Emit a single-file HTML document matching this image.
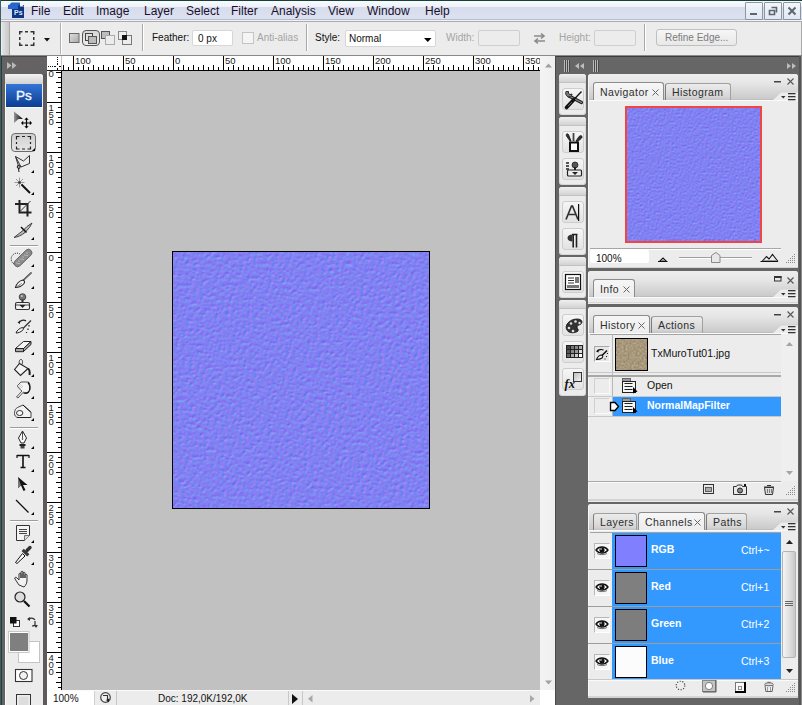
<!DOCTYPE html><html><head><meta charset="utf-8"><style>
*{margin:0;padding:0;box-sizing:border-box}
html,body{width:802px;height:705px;overflow:hidden}
body{position:relative;background:#616161;font-family:"Liberation Sans",sans-serif;}
div{position:absolute}
.t{white-space:nowrap;line-height:1}
svg{position:absolute;overflow:visible}
.tab{font-size:10.5px;letter-spacing:0.4px;color:#2e2e2e}
.op{font-size:10px;color:#111}
</style></head><body>
<svg width="0" height="0" style="position:absolute">
<defs>
<filter id="nm" x="0" y="0" width="100%" height="100%" color-interpolation-filters="sRGB">
 <feTurbulence type="fractalNoise" baseFrequency="0.28" numOctaves="3" seed="3"/>
 <feColorMatrix type="matrix" values="1 0 0 0 0  1 0 0 0 0  1 0 0 0 0  0 0 0 0 1"/>
 <feComponentTransfer result="h"><feFuncR type="gamma" amplitude="2" exponent="3" offset="0"/><feFuncG type="gamma" amplitude="2" exponent="3" offset="0"/><feFuncB type="gamma" amplitude="2" exponent="3" offset="0"/></feComponentTransfer>
 <feConvolveMatrix in="h" order="3" kernelMatrix="-1 0 1 -2 0 2 -1 0 1" divisor="23" bias="0.505" preserveAlpha="true" result="dx"/>
 <feConvolveMatrix in="h" order="3" kernelMatrix="-1 -2 -1 0 0 0 1 2 1" divisor="23" bias="0.505" preserveAlpha="true" result="dy"/>
 <feColorMatrix in="dx" type="matrix" values="1 0 0 0 0  0 0 0 0 0  0 0 0 0 0  0 0 0 0 1" result="r"/>
 <feColorMatrix in="dy" type="matrix" values="0 0 0 0 0  1 0 0 0 0  0 0 0 0 0.95  0 0 0 0 1" result="g"/>
 <feComposite in="r" in2="g" operator="arithmetic" k2="1" k3="1"/>
</filter>
<filter id="nm2" x="0" y="0" width="100%" height="100%" color-interpolation-filters="sRGB">
 <feTurbulence type="fractalNoise" baseFrequency="0.5" numOctaves="3" seed="3"/>
 <feColorMatrix type="matrix" values="1 0 0 0 0  1 0 0 0 0  1 0 0 0 0  0 0 0 0 1"/>
 <feComponentTransfer result="h"><feFuncR type="gamma" amplitude="2" exponent="3" offset="0"/><feFuncG type="gamma" amplitude="2" exponent="3" offset="0"/><feFuncB type="gamma" amplitude="2" exponent="3" offset="0"/></feComponentTransfer>
 <feConvolveMatrix in="h" order="3" kernelMatrix="-1 0 1 -2 0 2 -1 0 1" divisor="24" bias="0.505" preserveAlpha="true" result="dx"/>
 <feConvolveMatrix in="h" order="3" kernelMatrix="-1 -2 -1 0 0 0 1 2 1" divisor="24" bias="0.505" preserveAlpha="true" result="dy"/>
 <feColorMatrix in="dx" type="matrix" values="1 0 0 0 0  0 0 0 0 0  0 0 0 0 0  0 0 0 0 1" result="r"/>
 <feColorMatrix in="dy" type="matrix" values="0 0 0 0 0  1 0 0 0 0  0 0 0 0 0.95  0 0 0 0 1" result="g"/>
 <feComposite in="r" in2="g" operator="arithmetic" k2="1" k3="1"/>
</filter>
<filter id="tan" x="0" y="0" width="100%" height="100%" color-interpolation-filters="sRGB">
 <feTurbulence type="fractalNoise" baseFrequency="0.5" numOctaves="2" seed="7" result="n"/>
 <feColorMatrix in="n" type="matrix" values="0 0.25 0 0 0.53  0 0.25 0 0 0.47  0 0.25 0 0 0.36  0 0 0 0 1"/>
</filter>
</defs></svg>
<div style="left:0px;top:0px;width:802px;height:19px;background:linear-gradient(#fdfdff 0px,#f6f8fc 2px,#eef1f9 7.5px,#d5dcec 7.5px,#dde2f2 19px)"></div>
<div style="left:0px;top:0px;width:802px;height:1px;background:#16403a"></div>
<div style="left:0px;top:19px;width:802px;height:1px;background:#b9bdc9"></div>
<div style="left:0px;top:20px;width:802px;height:1px;background:#f2f3f7"></div>
<div style="left:0px;top:21px;width:802px;height:1px;background:#acacac"></div>
<svg style="left:8px;top:2px;" width="17" height="17" viewBox="0 0 17 17"><path d="M0.5 3.5h14l-3-3h-8z" fill="#2b63c9"/><rect x="4" y="3" width="12" height="13" fill="#0d3684"/><rect x="0" y="3" width="10" height="4" fill="#2a64cc"/><path d="M12 0.5l4 4h-4z" fill="#f4f6fa"/><text x="6" y="13" font-size="7" font-family="Liberation Sans" font-weight="bold" fill="#dfe8fb">Ps</text></svg>
<div class="t" style="left:31px;top:5px;font-size:12px;color:#1b0f2c">File</div>
<div class="t" style="left:63px;top:5px;font-size:12px;color:#1b0f2c">Edit</div>
<div class="t" style="left:96px;top:5px;font-size:12px;color:#1b0f2c">Image</div>
<div class="t" style="left:144px;top:5px;font-size:12px;color:#1b0f2c">Layer</div>
<div class="t" style="left:186px;top:5px;font-size:12px;color:#1b0f2c">Select</div>
<div class="t" style="left:231px;top:5px;font-size:12px;color:#1b0f2c">Filter</div>
<div class="t" style="left:271px;top:5px;font-size:12px;color:#1b0f2c">Analysis</div>
<div class="t" style="left:328px;top:5px;font-size:12px;color:#1b0f2c">View</div>
<div class="t" style="left:367px;top:5px;font-size:12px;color:#1b0f2c">Window</div>
<div class="t" style="left:425px;top:5px;font-size:12px;color:#1b0f2c">Help</div>
<div style="left:745px;top:2px;width:18px;height:18px;background:linear-gradient(#f2f6fb,#dfe8f3);border:1px solid #8d969e;border-radius:1px"></div>
<div style="left:764px;top:2px;width:18px;height:18px;background:linear-gradient(#f2f6fb,#dfe8f3);border:1px solid #8d969e;border-radius:1px"></div>
<div style="left:783px;top:2px;width:18px;height:18px;background:linear-gradient(#f2f6fb,#dfe8f3);border:1px solid #8d969e;border-radius:1px"></div>
<div style="left:750px;top:13px;width:7px;height:2px;background:#5d6670"></div>
<svg style="left:768px;top:6px;" width="10" height="10" viewBox="0 0 10 10"><path d="M3.5 1.5h5v5M1.5 4.5h5v4h-5z" fill="none" stroke="#5d6670" stroke-width="1.6"/></svg>
<svg style="left:787px;top:6px;" width="10" height="10" viewBox="0 0 10 10"><path d="M1.5 1.5l7 7M8.5 1.5l-7 7" stroke="#5d6670" stroke-width="2"/></svg>
<div style="left:1px;top:22px;width:801px;height:34px;background:#ececec"></div>
<div style="left:2px;top:22px;width:7px;height:33px;background:linear-gradient(90deg,#e2e2e2,#c9c9c9)"></div>
<div style="left:9px;top:22px;width:1px;height:33px;background:#a8a8a8"></div>
<div style="left:801px;top:22px;width:1px;height:34px;background:#a8a8a8"></div>
<div style="left:1px;top:55px;width:801px;height:1px;background:#8a8a8a"></div>
<svg style="left:19px;top:31px;" width="16" height="15" viewBox="0 0 16 15"><path d="M0.75 3.5V0.75H3.5M6 0.75h3M11.5 0.75h3.25V3.5M14.75 6v3M14.75 11.5v2.75H11.5M9 14.25H6M3.5 14.25H0.75V11.5M0.75 9V6" fill="none" stroke="#333" stroke-width="1.5"/></svg>
<svg style="left:44px;top:38px;" width="6" height="4" viewBox="0 0 6 4"><path d="M0 0h6l-3 3.5z" fill="#111"/></svg>
<div style="left:60px;top:23px;width:1px;height:31px;background:#b0b0b0"></div>
<div style="left:61px;top:23px;width:1px;height:31px;background:#fff"></div>
<svg style="left:69px;top:33px;" width="11" height="10" viewBox="0 0 11 10"><rect x="0.5" y="0.5" width="9.5" height="9" fill="url(#gsq)" stroke="#6a6a6a"/><defs><linearGradient id="gsq" x1="0" y1="0" x2="1" y2="1"><stop offset="0" stop-color="#e0e0e0"/><stop offset="1" stop-color="#a8a8a8"/></linearGradient></defs></svg>
<div style="left:82px;top:30px;width:18px;height:16px;background:linear-gradient(#d6d6d6,#ededed);border:1.5px solid #555;border-radius:4px"></div>
<svg style="left:85px;top:33px;" width="12" height="11" viewBox="0 0 12 11"><rect x="0.5" y="0.5" width="7" height="7" fill="#ddd" stroke="#444"/><rect x="3.5" y="3.5" width="8" height="7" fill="#bbb" stroke="#555"/></svg>
<svg style="left:101px;top:31px;" width="14" height="14" viewBox="0 0 14 14"><rect x="0.5" y="0.5" width="8" height="7" fill="#bdbdbd" stroke="#555"/><rect x="4.5" y="4.5" width="9" height="9" fill="#ececec" stroke="#aaa"/></svg>
<svg style="left:118px;top:31px;" width="14" height="14" viewBox="0 0 14 14"><rect x="0.5" y="0.5" width="8" height="8" fill="#eee" stroke="#888"/><rect x="4.5" y="4.5" width="9" height="9" fill="none" stroke="#777"/><rect x="4" y="4" width="5" height="5" fill="#111"/></svg>
<div style="left:142px;top:24px;width:1px;height:27px;background:#a8a8a8"></div>
<div style="left:143px;top:24px;width:1px;height:27px;background:#fff"></div>
<div class="t op" style="left:152px;top:33px;">Feather:</div>
<div style="left:192px;top:30px;width:41px;height:16px;background:#fff;border:1px solid #d6d6d6;border-radius:2px"></div>
<div class="t op" style="left:198px;top:34px;">0 px</div>
<div style="left:242px;top:32px;width:12px;height:12px;background:#f4f4f4;border:1px solid #c4c4c4"></div>
<div class="t op" style="left:257px;top:33px;color:#a4a4a4">Anti-alias</div>
<div style="left:306px;top:24px;width:1px;height:27px;background:#a8a8a8"></div>
<div style="left:307px;top:24px;width:1px;height:27px;background:#fff"></div>
<div class="t op" style="left:315px;top:33px;">Style:</div>
<div style="left:345px;top:30px;width:91px;height:17px;background:#fff;border:1px solid #d6d6d6;border-radius:2px"></div>
<div class="t op" style="left:349px;top:34px;">Normal</div>
<svg style="left:424px;top:38px;" width="8" height="5" viewBox="0 0 8 5"><path d="M0 0h7.5l-3.75 4z" fill="#000"/></svg>
<div class="t op" style="left:446px;top:33px;color:#a4a4a4">Width:</div>
<div style="left:478px;top:30px;width:42px;height:16px;background:#ececec;border:1px solid #cfcfcf;border-radius:2px"></div>
<svg style="left:533px;top:33px;" width="13" height="11" viewBox="0 0 13 11"><path d="M1 3h10M8 0.5l3 2.5-3 2.5M12 8H2M5 5.5l-3 2.5 3 2.5" fill="none" stroke="#8a8a8a" stroke-width="1.6"/></svg>
<div class="t op" style="left:559px;top:33px;color:#a4a4a4">Height:</div>
<div style="left:594px;top:30px;width:42px;height:16px;background:#ececec;border:1px solid #cfcfcf;border-radius:2px"></div>
<div style="left:644px;top:24px;width:1px;height:27px;background:#a8a8a8"></div>
<div style="left:645px;top:24px;width:1px;height:27px;background:#fff"></div>
<div style="left:656px;top:29px;width:81px;height:17px;background:linear-gradient(#f6f6f6,#e8e8e8);border:1px solid #c0c0c0;border-radius:3px"></div>
<div class="t op" style="left:665px;top:33px;color:#7c7c7c">Refine Edge...</div>
<div style="left:1px;top:56px;width:46px;height:649px;background:#646262"></div>
<div style="left:1px;top:56px;width:1px;height:649px;background:#2a3a3d"></div>
<div style="left:0px;top:0px;width:1px;height:705px;background:#3d5f5f"></div>
<div style="left:2px;top:56px;width:45px;height:1px;background:#4a4848"></div>
<div style="left:43px;top:74px;width:4px;height:631px;background:#5c5a5a"></div>
<svg style="left:7px;top:62px;" width="10" height="8" viewBox="0 0 10 8"><path d="M0 0l4.5 3.5L0 7zM5 0l4.5 3.5L5 7z" fill="#b9b9b9"/></svg>
<div style="left:5px;top:74px;width:38px;height:631px;background:#ececec;border-radius:3px 3px 0 0"></div>
<div style="left:5px;top:74px;width:1px;height:631px;background:#f8fcf8"></div>
<div style="left:5px;top:74px;width:38px;height:10px;background:linear-gradient(#f2f2f2,#d2d2d2);border-radius:3px 3px 0 0"></div>
<div style="left:6px;top:84px;width:36px;height:23px;background:linear-gradient(#3474d6,#0c3d92)"><div class="t" style="left:10px;top:5px;font-size:13.5px;color:#f4f7ff;-webkit-text-stroke:0.4px #f4f7ff;letter-spacing:0px">Ps</div></div>
<div style="left:6px;top:107px;width:36px;height:1px;background:#fafafa"></div>
<div style="left:11px;top:133px;width:25px;height:19px;background:linear-gradient(#d0d0d0,#e6e6e6);border:1.5px solid #6c6c6c;border-radius:4px"></div>
<svg style="left:0px;top:0px;" width="47" height="705" viewBox="0 0 47 705"><defs><linearGradient id="gmv" x1="0" x2="1"><stop offset="0" stop-color="#999"/><stop offset="1" stop-color="#000"/></linearGradient></defs><path d="M14 111.5l9 7.5h-4.5l-4.5 4z" fill="url(#gmv)"/><path d="M26.5 119v8M22.5 123h8" stroke="#000" stroke-width="1.2"/><path d="M26.5 117.5l-2.2 2.2h4.4zM26.5 128.5l-2.2-2.2h4.4zM21 123l2.2-2.2v4.4zM32 123l-2.2-2.2v4.4z" fill="#000"/><path d="M16.5 139.5v-3h3M22 136.5h3M27.5 136.5h3v3M30.5 142v2M30.5 146.5v2.5h-3M25 149h-3M19.5 149h-3v-2.5M16.5 144v-2" fill="none" stroke="#222" stroke-width="1.2"/><path d="M32 151h3v-3z" fill="#000"/><path d="M15.5 156.5l8 4.5 6-5.5v8l-8.5 3.5zM15.5 156.5l3 9.5" fill="none" stroke="#333" stroke-width="1"/><path d="M19.5 166c-2 -1-3 1-1.5 2 1.5 1 3-1 1.5-2.5M18.5 168.5l0.5 3.5" fill="none" stroke="#222" stroke-width="1.1"/><path d="M31 173h3v-3z" fill="#000"/><path d="M19.5 177.5v10M14.5 182.5h10M16 179l7 7M23 179l-7 7" stroke="#777" stroke-width="0.7"/><circle cx="19.5" cy="182.5" r="1.3" fill="#333"/><path d="M21.5 184.5l8.5 8.5" stroke="#111" stroke-width="2"/><path d="M31 195h3v-3z" fill="#000"/><path d="M19.5 200v12.5h12M15 204h12.5v12.5" fill="none" stroke="#222" stroke-width="2"/><path d="M20.5 211l10-10" stroke="#333" stroke-width="1"/><path d="M14 237.5l9-7 4-4 5-3.5-2.5 4.5-4.5 5c-3 2.5-7 4.5-11 5z" fill="#bbb" stroke="#333" stroke-width="0.9"/><path d="M21 227l5.5 5.5" stroke="#111" stroke-width="1.5"/><path d="M31 240h3v-3z" fill="#000"/><rect x="10" y="245" width="28" height="1" fill="#9c9c9c"/><rect x="10" y="246" width="28" height="1" fill="#fff"/><rect x="10" y="427" width="28" height="1" fill="#9c9c9c"/><rect x="10" y="428" width="28" height="1" fill="#fff"/><rect x="10" y="520" width="28" height="1" fill="#9c9c9c"/><rect x="10" y="521" width="28" height="1" fill="#fff"/><rect x="12" y="254.5" width="22" height="7" rx="3.5" transform="rotate(-44 23 258)" fill="#8c8c8c" stroke="#5a5a5a" stroke-width="0.8"/><path d="M14 264a5 5 0 0 1 6-10" fill="none" stroke="#111" stroke-width="1" stroke-dasharray="1 1.1"/><g fill="#e6e6e6"><circle cx="17" cy="263" r="0.6"/><circle cx="19" cy="261" r="0.6"/><circle cx="21" cy="259" r="0.6"/><circle cx="23" cy="257" r="0.6"/><circle cx="25" cy="255" r="0.6"/><circle cx="27" cy="253" r="0.6"/><circle cx="19" cy="263.5" r="0.6"/><circle cx="23" cy="259.5" r="0.6"/><circle cx="27" cy="255.5" r="0.6"/></g><path d="M31 267h3v-3z" fill="#000"/><path d="M22.5 281l9-8.5" stroke="#222" stroke-width="1.6"/><path d="M22.8 280.7l8.5-8" stroke="#ddd" stroke-width="0.5"/><path d="M15.5 287.5c1-3.5 4-7 7.5-7.5 1.5 0.5 2 2 1 3.5-2 2.5-5.5 4-8.5 4z" fill="#f8f8f8" stroke="#222" stroke-width="1.1"/><path d="M16 287c2-1 4-2 6-4" stroke="#888" stroke-width="0.8"/><path d="M31 289h3v-3z" fill="#000"/><circle cx="22.5" cy="297" r="3.3" fill="#777" stroke="#333" stroke-width="0.8"/><circle cx="21.8" cy="296" r="1" fill="#ccc"/><rect x="21.5" y="299.5" width="2" height="3.5" fill="#333"/><rect x="15.5" y="302.5" width="14" height="7" rx="1.5" fill="#f2f2f2" stroke="#333" stroke-width="1.1"/><path d="M15.5 305h14" stroke="#333" stroke-width="0.9"/><path d="M19.5 305h6l-3 3z" fill="#222"/><path d="M31 311h3v-3z" fill="#000"/><path d="M19 323c1-3 5-3.5 7-2" fill="none" stroke="#222" stroke-width="1.2"/><path d="M17.5 322.5l2.5-2v3.5z" fill="#222"/><path d="M22 329.5l9-9" stroke="#333" stroke-width="1.3"/><path d="M16 333c1-3 4-5 6.5-5.5 1 0.5 1 2 0 3-2 1.5-4 2.5-6.5 2.5z" fill="#f2f2f2" stroke="#222" stroke-width="1"/><path d="M29 325v1.5M28 328.5v1.5M26.5 332v1" stroke="#222" stroke-width="1.2"/><path d="M31 333h3v-3z" fill="#000"/><path d="M15.5 348.5l8-7h7.5l-7.5 7z" fill="#f6f6f6" stroke="#222" stroke-width="1"/><path d="M15.5 348.5v3.2h8v-3.2zM23.5 348.5l7.5-7v3l-7.5 7z" fill="#aaa" stroke="#222" stroke-width="1" stroke-linejoin="round"/><path d="M31 355h3v-3z" fill="#000"/><path d="M14.5 369.5l5-6 8.5 5-7.5 7z" fill="#f4f4f4" stroke="#222" stroke-width="1.1"/><path d="M28 368.5c1.5 1 2 3 1.5 6.5" fill="none" stroke="#222" stroke-width="2"/><path d="M19.5 364c-1-3 0.5-5 2-4.5 1 0.5 1.5 2.5 0.5 5" fill="none" stroke="#333" stroke-width="0.9"/><path d="M31 377h3v-3z" fill="#000"/><path d="M16.5 397l5.5-6c-2-1.5-4.5-3.5-4.5-5.5l3.5-3.5h7.5c2 2.5 2.5 6.5 0.5 9.5-1.5 1.5-4 1.5-5.5 0.5l-5.5 6z" fill="#f4f4f4" stroke="#444" stroke-width="0.9"/><path d="M28 382.5c2 2.5 2.5 6.5 0.5 9.5-1.5 1.5-3.5 1.5-5 1" fill="none" stroke="#111" stroke-width="1.3"/><path d="M19 385l3 3M20 384l3 3M18.5 386.5l2.5 2.5" stroke="#bbb" stroke-width="0.7"/><path d="M31 399h3v-3z" fill="#000"/><path d="M14.5 413.5c0-3 1-5 3-6l5.5-2.5 8 7v5.5h-13c-2 0-3.5-2-3.5-4z" fill="#f2f2f2" stroke="#333" stroke-width="0.9"/><path d="M23 405l7.5 7" stroke="#111" stroke-width="1"/><ellipse cx="19.7" cy="413" rx="3.2" ry="2.5" fill="#fafafa" stroke="#333" stroke-width="1"/><path d="M17 417.5h13" stroke="#222" stroke-width="1"/><path d="M31 421h3v-3z" fill="#000"/><path d="M22.5 431l4 7-2.5 5h-3l-2.5-5z" fill="#fff" stroke="#222" stroke-width="1"/><path d="M22.5 432v6" stroke="#222" stroke-width="0.8"/><circle cx="22.5" cy="439" r="0.8" fill="#222"/><rect x="19.5" y="444" width="6" height="2" fill="#222"/><rect x="20.5" y="446" width="4" height="2.5" fill="#444"/><path d="M31 449h3v-3z" fill="#000"/><path d="M17 455.5h12M23 455.5V467.5M20.5 467.5h5" fill="none" stroke="#111" stroke-width="1.6"/><path d="M17 455v3M29 455v3" stroke="#111" stroke-width="1.2"/><path d="M31 472h3v-3z" fill="#000"/><path d="M18 477v11l3-2.5 2.5 5.5 2-1-2.5-5h4.5z" fill="#111"/><path d="M18 477v11l3-2.5z" fill="#777"/><path d="M31 493h3v-3z" fill="#000"/><path d="M16 500l12.5 12.5" stroke="#111" stroke-width="1.3"/><path d="M31 515h3v-3z" fill="#000"/><path d="M16.5 525.5h13v10l-5 5h-8z" fill="#f4f4f4" stroke="#333" stroke-width="1"/><path d="M24.5 540.5v-5h5" fill="#ddd" stroke="#555" stroke-width="0.8"/><path d="M19 529.5h8M19 531.5h8M19 533.5h8" stroke="#444" stroke-width="1"/><path d="M31 543h3v-3z" fill="#000"/><path d="M15.5 562.5l1.5 1 8-7.5-2.5-2.5z" fill="#fff" stroke="#111" stroke-width="1"/><rect x="21.5" y="551" width="8" height="3.2" transform="rotate(45 25.5 552.6)" fill="#3a3a3a"/><path d="M27 550.5l3-3" stroke="#333" stroke-width="3.4" stroke-linecap="round"/><path d="M31 565h3v-3z" fill="#000"/><path d="M19 585l-4-6c-1-2 1-2 2-1l2 2v-6c0-1 2-1 2 0v4-6c0-1 2-1 2 0v6-5c0-1 2-1 2 0v5-3c0-1 2-1 2 0v5c0 3-1 5-3 7z" fill="#f2f2f2" stroke="#333" stroke-width="1"/><circle cx="20" cy="597" r="5" fill="#ddd" stroke="#222" stroke-width="1.2"/><path d="M24 601l5.5 5.5" stroke="#111" stroke-width="2.2"/><rect x="13.5" y="620.5" width="6" height="6" fill="#fff" stroke="#333" stroke-width="1"/><rect x="10" y="617" width="6.5" height="6.5" fill="#111"/><path d="M29 620c0-2 4-3 6 0M35 621v4c0 0-1 1-3 1" fill="none" stroke="#333" stroke-width="1.2"/><path d="M27 619l3-2v4zM36 628l-2-3h4z" fill="#333"/><rect x="18.5" y="641.5" width="21" height="21" fill="#fff" stroke="#c4c4c4"/><rect x="8.5" y="631.5" width="20.5" height="21" fill="#fff" stroke="#c8c8c8"/><rect x="10" y="633" width="18" height="18" fill="#7f7f7f"/><rect x="15.5" y="669.5" width="16.5" height="12" fill="#fff" stroke="#333" stroke-width="1.1"/><circle cx="23.5" cy="675.5" r="4" fill="#f2f2f2" stroke="#333" stroke-width="1"/><rect x="16.5" y="694.5" width="14" height="12" fill="#eee" stroke="#333" stroke-width="1"/><rect x="18.5" y="696.5" width="10" height="10" fill="#ddd"/></svg>
<div style="left:47px;top:56px;width:508px;height:15px;background:#fff"></div>
<div style="left:47px;top:71px;width:15px;height:619px;background:#fff"></div>
<div style="left:62px;top:71px;width:478px;height:619px;background:#c1c1c1"></div>
<svg style="left:0px;top:0px;shape-rendering:crispEdges" width="555" height="705" viewBox="0 0 555 705"><rect x="62" y="70" width="478" height="1" fill="#000"/><defs><clipPath id="cv"><rect x="47" y="71" width="14" height="619"/></clipPath></defs><rect x="47" y="70" width="15" height="1" fill="#222"/><rect x="61" y="56" width="1" height="14" fill="#c8c8c8"/><rect x="61" y="71" width="1" height="619" fill="#000"/><rect x="57" y="57" width="1" height="1" fill="#111"/><rect x="57" y="59" width="1" height="1" fill="#111"/><rect x="57" y="61" width="1" height="1" fill="#111"/><rect x="57" y="63" width="1" height="1" fill="#111"/><rect x="57" y="65" width="1" height="1" fill="#111"/><rect x="57" y="67" width="1" height="1" fill="#111"/><rect x="57" y="69" width="1" height="1" fill="#111"/><rect x="48" y="66" width="1" height="1" fill="#111"/><rect x="50" y="66" width="1" height="1" fill="#111"/><rect x="52" y="66" width="1" height="1" fill="#111"/><rect x="54" y="66" width="1" height="1" fill="#111"/><rect x="56" y="66" width="1" height="1" fill="#111"/><rect x="58" y="66" width="1" height="1" fill="#111"/><rect x="60" y="66" width="1" height="1" fill="#111"/><rect x="56" y="65" width="3" height="3" fill="#fff"/><rect x="57" y="64" width="1" height="1" fill="#111"/><rect x="57" y="68" width="1" height="1" fill="#111"/><rect x="55" y="66" width="1" height="1" fill="#111"/><rect x="59" y="66" width="1" height="1" fill="#111"/><rect x="63" y="65" width="1" height="5" fill="#000"/><rect x="68" y="67" width="1" height="3" fill="#000"/><rect x="73" y="56" width="1" height="14" fill="#000"/><rect x="78" y="67" width="1" height="3" fill="#000"/><rect x="83" y="65" width="1" height="5" fill="#000"/><rect x="88" y="67" width="1" height="3" fill="#000"/><rect x="93" y="65" width="1" height="5" fill="#000"/><rect x="98" y="67" width="1" height="3" fill="#000"/><rect x="103" y="65" width="1" height="5" fill="#000"/><rect x="108" y="67" width="1" height="3" fill="#000"/><rect x="113" y="65" width="1" height="5" fill="#000"/><rect x="118" y="67" width="1" height="3" fill="#000"/><rect x="123" y="56" width="1" height="14" fill="#000"/><rect x="128" y="67" width="1" height="3" fill="#000"/><rect x="133" y="65" width="1" height="5" fill="#000"/><rect x="138" y="67" width="1" height="3" fill="#000"/><rect x="143" y="65" width="1" height="5" fill="#000"/><rect x="148" y="67" width="1" height="3" fill="#000"/><rect x="153" y="65" width="1" height="5" fill="#000"/><rect x="158" y="67" width="1" height="3" fill="#000"/><rect x="163" y="65" width="1" height="5" fill="#000"/><rect x="168" y="67" width="1" height="3" fill="#000"/><rect x="173" y="56" width="1" height="14" fill="#000"/><rect x="178" y="67" width="1" height="3" fill="#000"/><rect x="183" y="65" width="1" height="5" fill="#000"/><rect x="188" y="67" width="1" height="3" fill="#000"/><rect x="193" y="65" width="1" height="5" fill="#000"/><rect x="198" y="67" width="1" height="3" fill="#000"/><rect x="203" y="65" width="1" height="5" fill="#000"/><rect x="208" y="67" width="1" height="3" fill="#000"/><rect x="213" y="65" width="1" height="5" fill="#000"/><rect x="218" y="67" width="1" height="3" fill="#000"/><rect x="223" y="56" width="1" height="14" fill="#000"/><rect x="228" y="67" width="1" height="3" fill="#000"/><rect x="233" y="65" width="1" height="5" fill="#000"/><rect x="238" y="67" width="1" height="3" fill="#000"/><rect x="243" y="65" width="1" height="5" fill="#000"/><rect x="248" y="67" width="1" height="3" fill="#000"/><rect x="253" y="65" width="1" height="5" fill="#000"/><rect x="258" y="67" width="1" height="3" fill="#000"/><rect x="263" y="65" width="1" height="5" fill="#000"/><rect x="268" y="67" width="1" height="3" fill="#000"/><rect x="273" y="56" width="1" height="14" fill="#000"/><rect x="278" y="67" width="1" height="3" fill="#000"/><rect x="283" y="65" width="1" height="5" fill="#000"/><rect x="288" y="67" width="1" height="3" fill="#000"/><rect x="293" y="65" width="1" height="5" fill="#000"/><rect x="298" y="67" width="1" height="3" fill="#000"/><rect x="303" y="65" width="1" height="5" fill="#000"/><rect x="308" y="67" width="1" height="3" fill="#000"/><rect x="313" y="65" width="1" height="5" fill="#000"/><rect x="318" y="67" width="1" height="3" fill="#000"/><rect x="323" y="56" width="1" height="14" fill="#000"/><rect x="328" y="67" width="1" height="3" fill="#000"/><rect x="333" y="65" width="1" height="5" fill="#000"/><rect x="338" y="67" width="1" height="3" fill="#000"/><rect x="343" y="65" width="1" height="5" fill="#000"/><rect x="348" y="67" width="1" height="3" fill="#000"/><rect x="353" y="65" width="1" height="5" fill="#000"/><rect x="358" y="67" width="1" height="3" fill="#000"/><rect x="363" y="65" width="1" height="5" fill="#000"/><rect x="368" y="67" width="1" height="3" fill="#000"/><rect x="373" y="56" width="1" height="14" fill="#000"/><rect x="378" y="67" width="1" height="3" fill="#000"/><rect x="383" y="65" width="1" height="5" fill="#000"/><rect x="388" y="67" width="1" height="3" fill="#000"/><rect x="393" y="65" width="1" height="5" fill="#000"/><rect x="398" y="67" width="1" height="3" fill="#000"/><rect x="403" y="65" width="1" height="5" fill="#000"/><rect x="408" y="67" width="1" height="3" fill="#000"/><rect x="413" y="65" width="1" height="5" fill="#000"/><rect x="418" y="67" width="1" height="3" fill="#000"/><rect x="423" y="56" width="1" height="14" fill="#000"/><rect x="428" y="67" width="1" height="3" fill="#000"/><rect x="433" y="65" width="1" height="5" fill="#000"/><rect x="438" y="67" width="1" height="3" fill="#000"/><rect x="443" y="65" width="1" height="5" fill="#000"/><rect x="448" y="67" width="1" height="3" fill="#000"/><rect x="453" y="65" width="1" height="5" fill="#000"/><rect x="458" y="67" width="1" height="3" fill="#000"/><rect x="463" y="65" width="1" height="5" fill="#000"/><rect x="468" y="67" width="1" height="3" fill="#000"/><rect x="473" y="56" width="1" height="14" fill="#000"/><rect x="478" y="67" width="1" height="3" fill="#000"/><rect x="483" y="65" width="1" height="5" fill="#000"/><rect x="488" y="67" width="1" height="3" fill="#000"/><rect x="493" y="65" width="1" height="5" fill="#000"/><rect x="498" y="67" width="1" height="3" fill="#000"/><rect x="503" y="65" width="1" height="5" fill="#000"/><rect x="508" y="67" width="1" height="3" fill="#000"/><rect x="513" y="65" width="1" height="5" fill="#000"/><rect x="518" y="67" width="1" height="3" fill="#000"/><rect x="523" y="56" width="1" height="14" fill="#000"/><rect x="528" y="67" width="1" height="3" fill="#000"/><rect x="533" y="65" width="1" height="5" fill="#000"/><rect x="538" y="67" width="1" height="3" fill="#000"/><text x="75" y="64" font-family="Liberation Sans" font-size="9.5" fill="#1a1a1a">100</text><text x="125" y="64" font-family="Liberation Sans" font-size="9.5" fill="#1a1a1a">50</text><text x="175" y="64" font-family="Liberation Sans" font-size="9.5" fill="#1a1a1a">0</text><text x="225" y="64" font-family="Liberation Sans" font-size="9.5" fill="#1a1a1a">50</text><text x="275" y="64" font-family="Liberation Sans" font-size="9.5" fill="#1a1a1a">100</text><text x="325" y="64" font-family="Liberation Sans" font-size="9.5" fill="#1a1a1a">150</text><text x="375" y="64" font-family="Liberation Sans" font-size="9.5" fill="#1a1a1a">200</text><text x="425" y="64" font-family="Liberation Sans" font-size="9.5" fill="#1a1a1a">250</text><text x="475" y="64" font-family="Liberation Sans" font-size="9.5" fill="#1a1a1a">300</text><text x="525" y="64" font-family="Liberation Sans" font-size="9.5" fill="#1a1a1a">350</text><rect x="56" y="72" width="5" height="1" fill="#000"/><rect x="58" y="77" width="3" height="1" fill="#000"/><rect x="56" y="82" width="5" height="1" fill="#000"/><rect x="58" y="87" width="3" height="1" fill="#000"/><rect x="56" y="92" width="5" height="1" fill="#000"/><rect x="58" y="97" width="3" height="1" fill="#000"/><rect x="47" y="102" width="14" height="1" fill="#000"/><rect x="58" y="107" width="3" height="1" fill="#000"/><rect x="56" y="112" width="5" height="1" fill="#000"/><rect x="58" y="117" width="3" height="1" fill="#000"/><rect x="56" y="122" width="5" height="1" fill="#000"/><rect x="58" y="127" width="3" height="1" fill="#000"/><rect x="56" y="132" width="5" height="1" fill="#000"/><rect x="58" y="137" width="3" height="1" fill="#000"/><rect x="56" y="142" width="5" height="1" fill="#000"/><rect x="58" y="147" width="3" height="1" fill="#000"/><rect x="47" y="152" width="14" height="1" fill="#000"/><rect x="58" y="157" width="3" height="1" fill="#000"/><rect x="56" y="162" width="5" height="1" fill="#000"/><rect x="58" y="167" width="3" height="1" fill="#000"/><rect x="56" y="172" width="5" height="1" fill="#000"/><rect x="58" y="177" width="3" height="1" fill="#000"/><rect x="56" y="182" width="5" height="1" fill="#000"/><rect x="58" y="187" width="3" height="1" fill="#000"/><rect x="56" y="192" width="5" height="1" fill="#000"/><rect x="58" y="197" width="3" height="1" fill="#000"/><rect x="47" y="202" width="14" height="1" fill="#000"/><rect x="58" y="207" width="3" height="1" fill="#000"/><rect x="56" y="212" width="5" height="1" fill="#000"/><rect x="58" y="217" width="3" height="1" fill="#000"/><rect x="56" y="222" width="5" height="1" fill="#000"/><rect x="58" y="227" width="3" height="1" fill="#000"/><rect x="56" y="232" width="5" height="1" fill="#000"/><rect x="58" y="237" width="3" height="1" fill="#000"/><rect x="56" y="242" width="5" height="1" fill="#000"/><rect x="58" y="247" width="3" height="1" fill="#000"/><rect x="47" y="252" width="14" height="1" fill="#000"/><rect x="58" y="257" width="3" height="1" fill="#000"/><rect x="56" y="262" width="5" height="1" fill="#000"/><rect x="58" y="267" width="3" height="1" fill="#000"/><rect x="56" y="272" width="5" height="1" fill="#000"/><rect x="58" y="277" width="3" height="1" fill="#000"/><rect x="56" y="282" width="5" height="1" fill="#000"/><rect x="58" y="287" width="3" height="1" fill="#000"/><rect x="56" y="292" width="5" height="1" fill="#000"/><rect x="58" y="297" width="3" height="1" fill="#000"/><rect x="47" y="302" width="14" height="1" fill="#000"/><rect x="58" y="307" width="3" height="1" fill="#000"/><rect x="56" y="312" width="5" height="1" fill="#000"/><rect x="58" y="317" width="3" height="1" fill="#000"/><rect x="56" y="322" width="5" height="1" fill="#000"/><rect x="58" y="327" width="3" height="1" fill="#000"/><rect x="56" y="332" width="5" height="1" fill="#000"/><rect x="58" y="337" width="3" height="1" fill="#000"/><rect x="56" y="342" width="5" height="1" fill="#000"/><rect x="58" y="347" width="3" height="1" fill="#000"/><rect x="47" y="352" width="14" height="1" fill="#000"/><rect x="58" y="357" width="3" height="1" fill="#000"/><rect x="56" y="362" width="5" height="1" fill="#000"/><rect x="58" y="367" width="3" height="1" fill="#000"/><rect x="56" y="372" width="5" height="1" fill="#000"/><rect x="58" y="377" width="3" height="1" fill="#000"/><rect x="56" y="382" width="5" height="1" fill="#000"/><rect x="58" y="387" width="3" height="1" fill="#000"/><rect x="56" y="392" width="5" height="1" fill="#000"/><rect x="58" y="397" width="3" height="1" fill="#000"/><rect x="47" y="402" width="14" height="1" fill="#000"/><rect x="58" y="407" width="3" height="1" fill="#000"/><rect x="56" y="412" width="5" height="1" fill="#000"/><rect x="58" y="417" width="3" height="1" fill="#000"/><rect x="56" y="422" width="5" height="1" fill="#000"/><rect x="58" y="427" width="3" height="1" fill="#000"/><rect x="56" y="432" width="5" height="1" fill="#000"/><rect x="58" y="437" width="3" height="1" fill="#000"/><rect x="56" y="442" width="5" height="1" fill="#000"/><rect x="58" y="447" width="3" height="1" fill="#000"/><rect x="47" y="452" width="14" height="1" fill="#000"/><rect x="58" y="457" width="3" height="1" fill="#000"/><rect x="56" y="462" width="5" height="1" fill="#000"/><rect x="58" y="467" width="3" height="1" fill="#000"/><rect x="56" y="472" width="5" height="1" fill="#000"/><rect x="58" y="477" width="3" height="1" fill="#000"/><rect x="56" y="482" width="5" height="1" fill="#000"/><rect x="58" y="487" width="3" height="1" fill="#000"/><rect x="56" y="492" width="5" height="1" fill="#000"/><rect x="58" y="497" width="3" height="1" fill="#000"/><rect x="47" y="502" width="14" height="1" fill="#000"/><rect x="58" y="507" width="3" height="1" fill="#000"/><rect x="56" y="512" width="5" height="1" fill="#000"/><rect x="58" y="517" width="3" height="1" fill="#000"/><rect x="56" y="522" width="5" height="1" fill="#000"/><rect x="58" y="527" width="3" height="1" fill="#000"/><rect x="56" y="532" width="5" height="1" fill="#000"/><rect x="58" y="537" width="3" height="1" fill="#000"/><rect x="56" y="542" width="5" height="1" fill="#000"/><rect x="58" y="547" width="3" height="1" fill="#000"/><rect x="47" y="552" width="14" height="1" fill="#000"/><rect x="58" y="557" width="3" height="1" fill="#000"/><rect x="56" y="562" width="5" height="1" fill="#000"/><rect x="58" y="567" width="3" height="1" fill="#000"/><rect x="56" y="572" width="5" height="1" fill="#000"/><rect x="58" y="577" width="3" height="1" fill="#000"/><rect x="56" y="582" width="5" height="1" fill="#000"/><rect x="58" y="587" width="3" height="1" fill="#000"/><rect x="56" y="592" width="5" height="1" fill="#000"/><rect x="58" y="597" width="3" height="1" fill="#000"/><rect x="47" y="602" width="14" height="1" fill="#000"/><rect x="58" y="607" width="3" height="1" fill="#000"/><rect x="56" y="612" width="5" height="1" fill="#000"/><rect x="58" y="617" width="3" height="1" fill="#000"/><rect x="56" y="622" width="5" height="1" fill="#000"/><rect x="58" y="627" width="3" height="1" fill="#000"/><rect x="56" y="632" width="5" height="1" fill="#000"/><rect x="58" y="637" width="3" height="1" fill="#000"/><rect x="56" y="642" width="5" height="1" fill="#000"/><rect x="58" y="647" width="3" height="1" fill="#000"/><rect x="47" y="652" width="14" height="1" fill="#000"/><rect x="58" y="657" width="3" height="1" fill="#000"/><rect x="56" y="662" width="5" height="1" fill="#000"/><rect x="58" y="667" width="3" height="1" fill="#000"/><rect x="56" y="672" width="5" height="1" fill="#000"/><rect x="58" y="677" width="3" height="1" fill="#000"/><rect x="56" y="682" width="5" height="1" fill="#000"/><rect x="58" y="687" width="3" height="1" fill="#000"/><text x="48.5" y="76.5" font-family="Liberation Sans" font-size="9.5" fill="#1a1a1a" clip-path="url(#cv)">0</text><text x="48.5" y="111" font-family="Liberation Sans" font-size="9.5" fill="#1a1a1a" clip-path="url(#cv)">1</text><text x="48.5" y="118" font-family="Liberation Sans" font-size="9.5" fill="#1a1a1a" clip-path="url(#cv)">5</text><text x="48.5" y="125" font-family="Liberation Sans" font-size="9.5" fill="#1a1a1a" clip-path="url(#cv)">0</text><text x="48.5" y="161" font-family="Liberation Sans" font-size="9.5" fill="#1a1a1a" clip-path="url(#cv)">1</text><text x="48.5" y="168" font-family="Liberation Sans" font-size="9.5" fill="#1a1a1a" clip-path="url(#cv)">0</text><text x="48.5" y="175" font-family="Liberation Sans" font-size="9.5" fill="#1a1a1a" clip-path="url(#cv)">0</text><text x="48.5" y="211" font-family="Liberation Sans" font-size="9.5" fill="#1a1a1a" clip-path="url(#cv)">5</text><text x="48.5" y="218" font-family="Liberation Sans" font-size="9.5" fill="#1a1a1a" clip-path="url(#cv)">0</text><text x="48.5" y="261" font-family="Liberation Sans" font-size="9.5" fill="#1a1a1a" clip-path="url(#cv)">0</text><text x="48.5" y="311" font-family="Liberation Sans" font-size="9.5" fill="#1a1a1a" clip-path="url(#cv)">5</text><text x="48.5" y="318" font-family="Liberation Sans" font-size="9.5" fill="#1a1a1a" clip-path="url(#cv)">0</text><text x="48.5" y="361" font-family="Liberation Sans" font-size="9.5" fill="#1a1a1a" clip-path="url(#cv)">1</text><text x="48.5" y="368" font-family="Liberation Sans" font-size="9.5" fill="#1a1a1a" clip-path="url(#cv)">0</text><text x="48.5" y="375" font-family="Liberation Sans" font-size="9.5" fill="#1a1a1a" clip-path="url(#cv)">0</text><text x="48.5" y="411" font-family="Liberation Sans" font-size="9.5" fill="#1a1a1a" clip-path="url(#cv)">1</text><text x="48.5" y="418" font-family="Liberation Sans" font-size="9.5" fill="#1a1a1a" clip-path="url(#cv)">5</text><text x="48.5" y="425" font-family="Liberation Sans" font-size="9.5" fill="#1a1a1a" clip-path="url(#cv)">0</text><text x="48.5" y="461" font-family="Liberation Sans" font-size="9.5" fill="#1a1a1a" clip-path="url(#cv)">2</text><text x="48.5" y="468" font-family="Liberation Sans" font-size="9.5" fill="#1a1a1a" clip-path="url(#cv)">0</text><text x="48.5" y="475" font-family="Liberation Sans" font-size="9.5" fill="#1a1a1a" clip-path="url(#cv)">0</text><text x="48.5" y="511" font-family="Liberation Sans" font-size="9.5" fill="#1a1a1a" clip-path="url(#cv)">2</text><text x="48.5" y="518" font-family="Liberation Sans" font-size="9.5" fill="#1a1a1a" clip-path="url(#cv)">5</text><text x="48.5" y="525" font-family="Liberation Sans" font-size="9.5" fill="#1a1a1a" clip-path="url(#cv)">0</text><text x="48.5" y="561" font-family="Liberation Sans" font-size="9.5" fill="#1a1a1a" clip-path="url(#cv)">3</text><text x="48.5" y="568" font-family="Liberation Sans" font-size="9.5" fill="#1a1a1a" clip-path="url(#cv)">0</text><text x="48.5" y="575" font-family="Liberation Sans" font-size="9.5" fill="#1a1a1a" clip-path="url(#cv)">0</text><text x="48.5" y="611" font-family="Liberation Sans" font-size="9.5" fill="#1a1a1a" clip-path="url(#cv)">3</text><text x="48.5" y="618" font-family="Liberation Sans" font-size="9.5" fill="#1a1a1a" clip-path="url(#cv)">5</text><text x="48.5" y="625" font-family="Liberation Sans" font-size="9.5" fill="#1a1a1a" clip-path="url(#cv)">0</text><text x="48.5" y="661" font-family="Liberation Sans" font-size="9.5" fill="#1a1a1a" clip-path="url(#cv)">4</text><text x="48.5" y="668" font-family="Liberation Sans" font-size="9.5" fill="#1a1a1a" clip-path="url(#cv)">0</text><text x="48.5" y="675" font-family="Liberation Sans" font-size="9.5" fill="#1a1a1a" clip-path="url(#cv)">0</text></svg>
<div style="left:540px;top:56px;width:15px;height:634px;background:linear-gradient(90deg,#f4f4f4,#efefef)"></div>
<svg style="left:545px;top:63px;" width="8" height="5" viewBox="0 0 8 5"><path d="M0 4.5l3.5-4 3.5 4z" fill="#a0a0a0"/></svg>
<svg style="left:545px;top:680px;" width="8" height="5" viewBox="0 0 8 5"><path d="M0 0.5l3.5 4 3.5-4z" fill="#a0a0a0"/></svg>
<div style="left:47px;top:690px;width:493px;height:15px;background:#ececec"></div>
<div style="left:47px;top:690px;width:508px;height:1px;background:#fafafa"></div>
<div style="left:540px;top:690px;width:15px;height:15px;background:#fff"></div>
<div style="left:47px;top:691px;width:47px;height:14px;background:#fff"></div>
<div class="t op" style="left:53px;top:694px;">100%</div>
<div style="left:94px;top:691px;width:1px;height:14px;background:#d0d0d0"></div>
<svg style="left:100px;top:692px;" width="12" height="12" viewBox="0 0 12 12"><circle cx="5.5" cy="5.5" r="4.8" fill="#f0f0f0" stroke="#444" stroke-width="1.2"/><path d="M3 3.5h4.5v4.5" fill="none" stroke="#333" stroke-width="1.1"/><path d="M6 8l3 2.5 0-4z" fill="#222"/></svg>
<div style="left:116px;top:691px;width:1px;height:14px;background:#c8c8c8"></div>
<div class="t op" style="left:158px;top:694px;">Doc: 192,0K/192,0K</div>
<div style="left:288px;top:691px;width:1px;height:14px;background:#c8c8c8"></div>
<svg style="left:292px;top:694px;" width="6" height="10" viewBox="0 0 6 10"><path d="M0 0l6 5-6 5z" fill="#111"/></svg>
<div style="left:302px;top:691px;width:1px;height:14px;background:#c8c8c8"></div>
<svg style="left:308px;top:695px;" width="5" height="8" viewBox="0 0 5 8"><path d="M4.5 0v7.5L0 3.75z" fill="#a8a8a8"/></svg>
<svg style="left:530px;top:695px;" width="5" height="8" viewBox="0 0 5 8"><path d="M0 0v7.5l4.5-3.75z" fill="#a8a8a8"/></svg>
<div style="left:172px;top:251px;width:258px;height:258px;background:#000"></div>
<svg style="left:173px;top:252px;" width="256" height="256" viewBox="0 0 256 256"><rect width="256" height="256" filter="url(#nm)"/></svg>
<div style="left:555px;top:56px;width:247px;height:649px;background:#666"></div>
<div style="left:555px;top:56px;width:247px;height:1px;background:#3c3c3c"></div>
<div style="left:555px;top:56px;width:1px;height:649px;background:#4a4a4a"></div>
<svg style="left:0px;top:0px;" width="802" height="705" viewBox="0 0 802 705"><rect x="564" y="60" width="1" height="12" fill="#b8b8b8"/><rect x="565" y="60" width="1" height="12" fill="#484848"/><rect x="566" y="60" width="1" height="12" fill="#b8b8b8"/><rect x="567" y="60" width="1" height="12" fill="#484848"/><rect x="568" y="60" width="1" height="12" fill="#b8b8b8"/><rect x="569" y="60" width="1" height="12" fill="#484848"/><rect x="593" y="60" width="1" height="12" fill="#b8b8b8"/><rect x="594" y="60" width="1" height="12" fill="#484848"/><rect x="595" y="60" width="1" height="12" fill="#b8b8b8"/><rect x="596" y="60" width="1" height="12" fill="#484848"/><rect x="597" y="60" width="1" height="12" fill="#b8b8b8"/><rect x="598" y="60" width="1" height="12" fill="#484848"/><path d="M579 63v6l-4-3zM584 63v6l-4-3z" fill="#bdbdbd"/><path d="M787 63v6l4-3zM792 63v6l4-3z" fill="#bdbdbd"/></svg>
<div style="left:799px;top:56px;width:2px;height:649px;background:#555"></div>
<div style="left:801px;top:56px;width:1px;height:649px;background:#8c8c8c"></div>
<div style="left:559px;top:74px;width:27px;height:41px;background:#ececec;border-radius:3px;border:1px solid #d8d8d8;border-top:none"></div>
<div style="left:559px;top:74px;width:27px;height:9px;background:linear-gradient(#f0f0f0,#d2d2d2);border-radius:3px 3px 0 0;border-bottom:1px solid #c2c2c2"></div>
<div style="left:562px;top:88px;width:22px;height:22px;background:linear-gradient(#f6f6f6,#e2e2e2);border:1px solid #cdcdcd;border-radius:3px"></div>
<div style="left:559px;top:117px;width:27px;height:68px;background:#ececec;border-radius:3px;border:1px solid #d8d8d8;border-top:none"></div>
<div style="left:559px;top:117px;width:27px;height:9px;background:linear-gradient(#f0f0f0,#d2d2d2);border-radius:3px 3px 0 0;border-bottom:1px solid #c2c2c2"></div>
<div style="left:562px;top:131px;width:22px;height:22px;background:linear-gradient(#f6f6f6,#e2e2e2);border:1px solid #cdcdcd;border-radius:3px"></div>
<div style="left:562px;top:158px;width:22px;height:22px;background:linear-gradient(#f6f6f6,#e2e2e2);border:1px solid #cdcdcd;border-radius:3px"></div>
<div style="left:559px;top:187px;width:27px;height:68px;background:#ececec;border-radius:3px;border:1px solid #d8d8d8;border-top:none"></div>
<div style="left:559px;top:187px;width:27px;height:9px;background:linear-gradient(#f0f0f0,#d2d2d2);border-radius:3px 3px 0 0;border-bottom:1px solid #c2c2c2"></div>
<div style="left:562px;top:201px;width:22px;height:22px;background:linear-gradient(#f6f6f6,#e2e2e2);border:1px solid #cdcdcd;border-radius:3px"></div>
<div style="left:562px;top:228px;width:22px;height:22px;background:linear-gradient(#f6f6f6,#e2e2e2);border:1px solid #cdcdcd;border-radius:3px"></div>
<div style="left:559px;top:257px;width:27px;height:41px;background:#ececec;border-radius:3px;border:1px solid #d8d8d8;border-top:none"></div>
<div style="left:559px;top:257px;width:27px;height:9px;background:linear-gradient(#f0f0f0,#d2d2d2);border-radius:3px 3px 0 0;border-bottom:1px solid #c2c2c2"></div>
<div style="left:562px;top:271px;width:22px;height:22px;background:linear-gradient(#f6f6f6,#e2e2e2);border:1px solid #cdcdcd;border-radius:3px"></div>
<div style="left:559px;top:300px;width:27px;height:96px;background:#ececec;border-radius:3px;border:1px solid #d8d8d8;border-top:none"></div>
<div style="left:559px;top:300px;width:27px;height:9px;background:linear-gradient(#f0f0f0,#d2d2d2);border-radius:3px 3px 0 0;border-bottom:1px solid #c2c2c2"></div>
<div style="left:562px;top:314px;width:22px;height:22px;background:linear-gradient(#f6f6f6,#e2e2e2);border:1px solid #cdcdcd;border-radius:3px"></div>
<div style="left:562px;top:341px;width:22px;height:22px;background:linear-gradient(#f6f6f6,#e2e2e2);border:1px solid #cdcdcd;border-radius:3px"></div>
<div style="left:562px;top:368px;width:22px;height:22px;background:linear-gradient(#f6f6f6,#e2e2e2);border:1px solid #cdcdcd;border-radius:3px"></div>
<svg style="left:0px;top:0px;" width="802" height="705" viewBox="0 0 802 705"><path d="M569 96l12.5 6.5" stroke="#222" stroke-width="3.2" stroke-linecap="round"/><path d="M569 96l12.5 6.5" stroke="#888" stroke-width="1.4" stroke-linecap="round"/><path d="M566 91.5c-1 2 0 5 3 5.5 2 0 3-1.5 3-3l-2 0.5-1.5-1 0-2c-1 0-2 0-2.5 0z" fill="#777" stroke="#222" stroke-width="0.9"/><path d="M581.5 91.5l-8 8.5" stroke="#111" stroke-width="1.3"/><path d="M573.5 100l-7 7.5" stroke="#111" stroke-width="3.6" stroke-linecap="round"/><path d="M572 102l-4 4" stroke="#777" stroke-width="0.8"/><path d="M570 141l-3.5-5c-1-2 1-3 2-1.5l2.5 6.5z" fill="#333" stroke="#111" stroke-width="0.8"/><path d="M573.5 141v-8" stroke="#444" stroke-width="1.8"/><path d="M576 141l3-4.5c1.5-1.5 3.5-1 3 1-1 1.5-3 3-5 4z" fill="#333" stroke="#111" stroke-width="0.8"/><rect x="570" y="142.5" width="8" height="8.5" fill="#fff" stroke="#111" stroke-width="2"/><path d="M566 163h3M566 166h3M566 169h3" stroke="#222" stroke-width="1.3"/><circle cx="575" cy="165" r="3" fill="#555" stroke="#222" stroke-width="0.8"/><rect x="574" y="167" width="2" height="3" fill="#222"/><rect x="567.5" y="170" width="14" height="6" rx="1" fill="#eee" stroke="#222" stroke-width="1.2"/><path d="M572 172h6l-3 3z" fill="#222"/><path d="M566 219.5l5.5-13.5h1l5.5 13.5M568.5 214.5h7" fill="none" stroke="#333" stroke-width="1.7"/><rect x="578" y="204" width="1.2" height="17" fill="#111"/><path d="M572 234.5h5.5M573.2 234.5v13M576.5 234.5v13" stroke="#222" stroke-width="1.6"/><path d="M572.5 234.5c-3 0-5 1.5-5 3.5s2 3.5 5 3.5z" fill="#333"/><rect x="565.5" y="274.5" width="15" height="15" fill="#fff" stroke="#111" stroke-width="1.2"/><path d="M568 278h6M568 280.5h6M568 283h6" stroke="#333" stroke-width="1"/><rect x="575" y="277" width="4" height="6" fill="#777"/><rect x="567" y="285" width="12" height="3" fill="#777"/><path d="M567 330c-3-4 2-11 10-11 5 0 6 3 4 5-1 1-4 1-4 3s2 2 1 4c-2 2-9 3-11-1z" fill="#333" stroke="#111" stroke-width="0.8"/><g fill="#ddd"><circle cx="571" cy="323.5" r="1.3"/><circle cx="575.5" cy="321.5" r="1.3"/><circle cx="579.5" cy="323" r="1.2"/><circle cx="569" cy="328" r="1.3"/><circle cx="573" cy="331" r="1.3"/></g><rect x="566" y="345" width="17" height="13" fill="#222"/><rect x="567" y="346" width="3" height="3" fill="#444"/><rect x="571" y="346" width="3" height="3" fill="#777"/><rect x="575" y="346" width="3" height="3" fill="#888"/><rect x="579" y="346" width="3" height="3" fill="#aaa"/><rect x="567" y="350" width="3" height="3" fill="#555"/><rect x="571" y="350" width="3" height="3" fill="#888"/><rect x="575" y="350" width="3" height="3" fill="#999"/><rect x="579" y="350" width="3" height="3" fill="#ddd"/><rect x="567" y="354" width="3" height="3" fill="#666"/><rect x="571" y="354" width="3" height="3" fill="#aaa"/><rect x="575" y="354" width="3" height="3" fill="#ccc"/><rect x="579" y="354" width="3" height="3" fill="#fff"/><defs><linearGradient id="gfx" x1="0" y1="0" x2="1" y2="1"><stop offset="0" stop-color="#bbb"/><stop offset="1" stop-color="#f4f4f4"/></linearGradient></defs><rect x="573.5" y="372.5" width="8" height="9" fill="url(#gfx)" stroke="#333" stroke-width="1"/><text x="564.5" y="388" font-family="Liberation Serif" font-style="italic" font-weight="bold" font-size="12.5" fill="#111">fx</text></svg>
<div style="left:588px;top:74px;width:210px;height:194px;background:#ececec;border-radius:3px 3px 0 0"></div>
<div style="left:588px;top:74px;width:210px;height:26px;background:linear-gradient(#eeeeee 0%,#e6e6e6 35%,#cacaca 96%,#b4b4b4 100%);border-radius:3px 3px 0 0"></div>
<div style="left:588px;top:76px;width:1px;height:192px;background:#f8f8f8"></div>
<div style="left:593px;top:82px;width:71px;height:19px;background:linear-gradient(#f6f6f6,#ececec);border:1px solid #8c8c8c;border-bottom:none;border-radius:3px 3px 0 0"></div>
<div class="t tab" style="left:600px;top:87px;">Navigator</div>
<div style="left:665px;top:83px;width:66px;height:17px;background:linear-gradient(#ececec,#d6d6d6 80%,#c4c4c4);border:1px solid #a0a0a0;border-bottom:none;border-left:1.5px solid #7c7c7c;border-radius:3px 3px 0 0"></div>
<div class="t tab" style="left:672px;top:87px;">Histogram</div>
<div style="left:588px;top:100px;width:210px;height:1px;background:#fafafa"></div>
<div style="left:588px;top:271px;width:210px;height:33px;background:#ececec;border-radius:3px 3px 0 0"></div>
<div style="left:588px;top:271px;width:210px;height:26px;background:linear-gradient(#eeeeee 0%,#e6e6e6 35%,#cacaca 96%,#b4b4b4 100%);border-radius:3px 3px 0 0"></div>
<div style="left:588px;top:273px;width:1px;height:31px;background:#f8f8f8"></div>
<div style="left:593px;top:279px;width:42px;height:19px;background:linear-gradient(#f6f6f6,#ececec);border:1px solid #8c8c8c;border-bottom:none;border-radius:3px 3px 0 0"></div>
<div class="t tab" style="left:600px;top:284px;">Info</div>
<div style="left:588px;top:297px;width:210px;height:1px;background:#fafafa"></div>
<div style="left:588px;top:307px;width:210px;height:195px;background:#ececec;border-radius:3px 3px 0 0"></div>
<div style="left:588px;top:307px;width:210px;height:26px;background:linear-gradient(#eeeeee 0%,#e6e6e6 35%,#cacaca 96%,#b4b4b4 100%);border-radius:3px 3px 0 0"></div>
<div style="left:588px;top:309px;width:1px;height:193px;background:#f8f8f8"></div>
<div style="left:593px;top:315px;width:57px;height:19px;background:linear-gradient(#f6f6f6,#ececec);border:1px solid #8c8c8c;border-bottom:none;border-radius:3px 3px 0 0"></div>
<div class="t tab" style="left:600px;top:320px;">History</div>
<div style="left:651px;top:316px;width:52px;height:17px;background:linear-gradient(#ececec,#d6d6d6 80%,#c4c4c4);border:1px solid #a0a0a0;border-bottom:none;border-left:1.5px solid #7c7c7c;border-radius:3px 3px 0 0"></div>
<div class="t tab" style="left:658px;top:320px;">Actions</div>
<div style="left:588px;top:333px;width:210px;height:1px;background:#fafafa"></div>
<div style="left:588px;top:504px;width:210px;height:194px;background:#ececec;border-radius:3px 3px 0 0"></div>
<div style="left:588px;top:504px;width:210px;height:26px;background:linear-gradient(#eeeeee 0%,#e6e6e6 35%,#cacaca 96%,#b4b4b4 100%);border-radius:3px 3px 0 0"></div>
<div style="left:588px;top:506px;width:1px;height:192px;background:#f8f8f8"></div>
<div style="left:593px;top:513px;width:44px;height:17px;background:linear-gradient(#ececec,#d6d6d6 80%,#c4c4c4);border:1px solid #a0a0a0;border-bottom:none;border-left:1.5px solid #7c7c7c;border-radius:3px 3px 0 0"></div>
<div class="t tab" style="left:600px;top:517px;">Layers</div>
<div style="left:638px;top:512px;width:67px;height:19px;background:linear-gradient(#f6f6f6,#ececec);border:1px solid #8c8c8c;border-bottom:none;border-radius:3px 3px 0 0"></div>
<div class="t tab" style="left:645px;top:517px;">Channels</div>
<div style="left:706px;top:513px;width:41px;height:17px;background:linear-gradient(#ececec,#d6d6d6 80%,#c4c4c4);border:1px solid #a0a0a0;border-bottom:none;border-left:1.5px solid #7c7c7c;border-radius:3px 3px 0 0"></div>
<div class="t tab" style="left:713px;top:517px;">Paths</div>
<div style="left:588px;top:530px;width:210px;height:1px;background:#fafafa"></div>
<div style="left:625px;top:106px;width:137px;height:137px;background:#f24444"></div>
<svg style="left:627px;top:108px;" width="133" height="133" viewBox="0 0 133 133"><rect width="133" height="133" filter="url(#nm2)"/></svg>
<div style="left:590px;top:248px;width:191px;height:1px;background:#a6a6a6"></div>
<div style="left:590px;top:249px;width:191px;height:1px;background:#fff"></div>
<div style="left:590px;top:250px;width:59px;height:13px;background:#fff;border-radius:2px"></div>
<div class="t op" style="left:596px;top:254px;">100%</div>
<div style="left:588px;top:267px;width:210px;height:1px;background:#d4d4d4"></div>
<div style="left:588px;top:302px;width:210px;height:1px;background:#d8d8d8"></div>
<div style="left:588px;top:334px;width:193px;height:38px;background:#ececec"></div>
<div style="left:590px;top:334px;width:191px;height:1px;background:#a4a4a4"></div>
<div style="left:612px;top:335px;width:1px;height:82px;background:#b8b8b8"></div>
<div style="left:594px;top:346px;width:16px;height:16px;background:#e6e6e6;border:1px solid #a8a8a8;border-right-color:#fff;border-bottom-color:#fff"></div>
<div style="left:615px;top:338px;width:33px;height:33px;background:#000"></div>
<svg style="left:616px;top:339px;" width="31" height="31" viewBox="0 0 31 31"><rect width="31" height="31" filter="url(#tan)"/></svg>
<div class="t" style="left:651px;top:348px;font-size:10.5px;color:#111">TxMuroTut01.jpg</div>
<div style="left:588px;top:372px;width:193px;height:1px;background:#c8c8c8"></div>
<div style="left:588px;top:375px;width:193px;height:2px;background:#a8a8a8"></div>
<div style="left:594px;top:378px;width:16px;height:16px;border:1px solid #d0d0d0;border-right-color:#fafafa;border-bottom-color:#fafafa"></div>
<div style="left:588px;top:396px;width:193px;height:1px;background:#c8c8c8"></div>
<div style="left:613px;top:397px;width:168px;height:19px;background:#3399ff"></div>
<div style="left:594px;top:398px;width:16px;height:16px;border:1px solid #d0d0d0;border-right-color:#fafafa;border-bottom-color:#fafafa"></div>
<div style="left:588px;top:416px;width:193px;height:1px;background:#c8c8c8"></div>
<div class="t" style="left:647px;top:380px;font-size:10.5px;color:#111">Open</div>
<div class="t" style="left:647px;top:400px;font-size:10.5px;font-weight:bold;color:#fff">NormalMapFilter</div>
<div style="left:781px;top:334px;width:17px;height:147px;background:#efefef"></div>
<div style="left:588px;top:481px;width:193px;height:1px;background:#a8a8a8"></div>
<div style="left:588px;top:482px;width:193px;height:1px;background:#fafafa"></div>
<div style="left:588px;top:499px;width:210px;height:2px;background:#d4d4d4"></div>
<div style="left:590px;top:532px;width:191px;height:1px;background:#a4a4a4"></div>
<div style="left:612px;top:533px;width:169px;height:36px;background:#3399ff"></div>
<div style="left:594px;top:543px;width:16px;height:16px;background:#f6f6f6;border:1px solid #b8b8b8;border-right-color:#fff;border-bottom-color:#fff"></div>
<div style="left:615px;top:535px;width:32px;height:32px;background:#8080ff;border:1.3px solid #000"></div>
<div class="t" style="left:651px;top:544px;font-size:10.5px;font-weight:bold;color:#fff">RGB</div>
<div class="t" style="left:741px;top:545px;font-size:10.5px;color:#fff">Ctrl+~</div>
<div style="left:612px;top:570px;width:169px;height:36px;background:#3399ff"></div>
<div style="left:588px;top:569px;width:193px;height:1px;background:#a09c98"></div>
<div style="left:594px;top:580px;width:16px;height:16px;background:#f6f6f6;border:1px solid #b8b8b8;border-right-color:#fff;border-bottom-color:#fff"></div>
<div style="left:615px;top:572px;width:32px;height:32px;background:#7f7f7f;border:1.3px solid #000"></div>
<div class="t" style="left:651px;top:581px;font-size:10.5px;font-weight:bold;color:#fff">Red</div>
<div class="t" style="left:741px;top:582px;font-size:10.5px;color:#fff">Ctrl+1</div>
<div style="left:612px;top:607px;width:169px;height:36px;background:#3399ff"></div>
<div style="left:588px;top:606px;width:193px;height:1px;background:#a09c98"></div>
<div style="left:594px;top:617px;width:16px;height:16px;background:#f6f6f6;border:1px solid #b8b8b8;border-right-color:#fff;border-bottom-color:#fff"></div>
<div style="left:615px;top:609px;width:32px;height:32px;background:#7d7d7d;border:1.3px solid #000"></div>
<div class="t" style="left:651px;top:618px;font-size:10.5px;font-weight:bold;color:#fff">Green</div>
<div class="t" style="left:741px;top:619px;font-size:10.5px;color:#fff">Ctrl+2</div>
<div style="left:612px;top:644px;width:169px;height:36px;background:#3399ff"></div>
<div style="left:588px;top:643px;width:193px;height:1px;background:#a09c98"></div>
<div style="left:594px;top:654px;width:16px;height:16px;background:#f6f6f6;border:1px solid #b8b8b8;border-right-color:#fff;border-bottom-color:#fff"></div>
<div style="left:615px;top:646px;width:32px;height:32px;background:#fcfcfc;border:1.3px solid #000"></div>
<div class="t" style="left:651px;top:655px;font-size:10.5px;font-weight:bold;color:#fff">Blue</div>
<div class="t" style="left:741px;top:656px;font-size:10.5px;color:#fff">Ctrl+3</div>
<div style="left:781px;top:532px;width:17px;height:147px;background:#ededed"></div>
<div style="left:782px;top:551px;width:14px;height:107px;background:linear-gradient(90deg,#f4f4f4,#dcdcdc 60%,#c8c8c8);border:1px solid #b4b4b4;border-radius:2px"></div>
<div style="left:588px;top:679px;width:210px;height:1px;background:#c8c8c8"></div>
<div style="left:588px;top:680px;width:210px;height:1px;background:#fafafa"></div>
<div style="left:588px;top:696px;width:210px;height:2px;background:#d4d4d4"></div>
<svg style="left:0px;top:0px;" width="802" height="705" viewBox="0 0 802 705"><path d="M773 100l8-8h17v8z" fill="#ececec"/><path d="M773 100l8-8h17" fill="none" stroke="#d4d4d4" stroke-width="1"/><path d="M652.5 89.5l6 6M658.5 89.5l-6 6" stroke="#666" stroke-width="1"/><rect x="774" y="81" width="7" height="1.5" fill="#444"/><path d="M787.5 78.5l6 6M793.5 78.5l-6 6" stroke="#555" stroke-width="1.1"/><path d="M781 96h4.5l-2.25 2.5z" fill="#333"/><rect x="788" y="93" width="7.5" height="1.3" fill="#333"/><rect x="788" y="96" width="7.5" height="1.3" fill="#333"/><rect x="788" y="99" width="7.5" height="1.3" fill="#333"/><path d="M773 297l8-8h17v8z" fill="#ececec"/><path d="M773 297l8-8h17" fill="none" stroke="#d4d4d4" stroke-width="1"/><path d="M623.5 286.5l6 6M629.5 286.5l-6 6" stroke="#666" stroke-width="1"/><rect x="774.5" y="276.5" width="6.5" height="4.5" fill="none" stroke="#333" stroke-width="1"/><rect x="774" y="276" width="7.5" height="2" fill="#333"/><path d="M787.5 277.5l6 6M793.5 277.5l-6 6" stroke="#555" stroke-width="1.1"/><path d="M781 293h4.5l-2.25 2.5z" fill="#333"/><rect x="788" y="290" width="7.5" height="1.3" fill="#333"/><rect x="788" y="293" width="7.5" height="1.3" fill="#333"/><rect x="788" y="296" width="7.5" height="1.3" fill="#333"/><path d="M773 333l8-8h17v8z" fill="#ececec"/><path d="M773 333l8-8h17" fill="none" stroke="#d4d4d4" stroke-width="1"/><path d="M638.5 322.5l6 6M644.5 322.5l-6 6" stroke="#666" stroke-width="1"/><rect x="774" y="314" width="7" height="1.5" fill="#444"/><path d="M787.5 311.5l6 6M793.5 311.5l-6 6" stroke="#555" stroke-width="1.1"/><path d="M781 329h4.5l-2.25 2.5z" fill="#333"/><rect x="788" y="326" width="7.5" height="1.3" fill="#333"/><rect x="788" y="329" width="7.5" height="1.3" fill="#333"/><rect x="788" y="332" width="7.5" height="1.3" fill="#333"/><path d="M773 530l8-8h17v8z" fill="#ececec"/><path d="M773 530l8-8h17" fill="none" stroke="#d4d4d4" stroke-width="1"/><path d="M694.5 519.5l6 6M700.5 519.5l-6 6" stroke="#666" stroke-width="1"/><rect x="774" y="511" width="7" height="1.5" fill="#444"/><path d="M787.5 508.5l6 6M793.5 508.5l-6 6" stroke="#555" stroke-width="1.1"/><path d="M781 526h4.5l-2.25 2.5z" fill="#333"/><rect x="788" y="523" width="7.5" height="1.3" fill="#333"/><rect x="788" y="526" width="7.5" height="1.3" fill="#333"/><rect x="788" y="529" width="7.5" height="1.3" fill="#333"/><path d="M658 261.5h9.5M659.5 261.5l3.5-3.5 3.5 3.5" fill="none" stroke="#111" stroke-width="1.1"/><path d="M661 260.5h4" stroke="#888" stroke-width="1"/><rect x="679" y="257" width="73" height="1" fill="#a0a0a0"/><rect x="679" y="258" width="73" height="1" fill="#fff"/><path d="M711.5 262.5v-7l4.5-3 4 3v7z" fill="#e8e8e8" stroke="#8a8a8a" stroke-width="1"/><path d="M760.5 261.5h17.5M762 261.5l4.5-5 2.5 2.5 3.5-4.5 5.5 7" fill="none" stroke="#111" stroke-width="1.1"/><path d="M764 260.5h12" stroke="#999" stroke-width="1"/><rect x="794" y="254" width="1" height="1" fill="#8c8c8c"/><rect x="792" y="256" width="1" height="1" fill="#8c8c8c"/><rect x="794" y="256" width="1" height="1" fill="#8c8c8c"/><rect x="790" y="258" width="1" height="1" fill="#8c8c8c"/><rect x="792" y="258" width="1" height="1" fill="#8c8c8c"/><rect x="794" y="258" width="1" height="1" fill="#8c8c8c"/><rect x="788" y="260" width="1" height="1" fill="#8c8c8c"/><rect x="790" y="260" width="1" height="1" fill="#8c8c8c"/><rect x="792" y="260" width="1" height="1" fill="#8c8c8c"/><rect x="794" y="260" width="1" height="1" fill="#8c8c8c"/><rect x="786" y="262" width="1" height="1" fill="#8c8c8c"/><rect x="788" y="262" width="1" height="1" fill="#8c8c8c"/><rect x="790" y="262" width="1" height="1" fill="#8c8c8c"/><rect x="792" y="262" width="1" height="1" fill="#8c8c8c"/><rect x="794" y="262" width="1" height="1" fill="#8c8c8c"/><path d="M597.5 351.5c1-2 4-2.5 6-1.5" fill="none" stroke="#111" stroke-width="1.2"/><path d="M596 351.5l2.5-2.5v3.5z" fill="#111"/><path d="M601.5 356l5.5-5.5" stroke="#111" stroke-width="1.6"/><path d="M596.5 359.5c1-2.5 3-4.5 5.5-4.5 1 0.5 1 2 0 3-1.5 1-3.5 1.5-5.5 1.5z" fill="#f4f4f4" stroke="#111" stroke-width="1.1"/><path d="M607.5 353v1M606.5 356v1M605 358.5v1" stroke="#222" stroke-width="1.1"/><rect x="622.5" y="378.5" width="8" height="3" fill="#9a9a9a" stroke="#555" stroke-width="0.8"/><rect x="622.5" y="381.5" width="13" height="11" fill="#f6f6f6" stroke="#222" stroke-width="1"/><path d="M624.5 383.5h8M624.5 386.5h8M624.5 389.5h8" stroke="#222" stroke-width="1"/><path d="M633 387l4.5 4.5-4.5 2z" fill="#000"/><rect x="622.5" y="398.5" width="8" height="3" fill="#9a9a9a" stroke="#555" stroke-width="0.8"/><rect x="622.5" y="401.5" width="13" height="11" fill="#f6f6f6" stroke="#222" stroke-width="1"/><path d="M624.5 403.5h8M624.5 406.5h8M624.5 409.5h8" stroke="#222" stroke-width="1"/><path d="M633 407l4.5 4.5-4.5 2z" fill="#000"/><path d="M610.5 402.5h4.5l3.5 4-3.5 4h-4.5z" fill="#fff" stroke="#000" stroke-width="1.4"/><path d="M786 346l3.5-4 3.5 4z" fill="#a4a4a4"/><path d="M786 471l3.5 4 3.5-4z" fill="#a4a4a4"/><rect x="703.5" y="484.5" width="10" height="9" fill="#e8e8e8" stroke="#333" stroke-width="1"/><rect x="705.5" y="487.5" width="6" height="4" fill="#aaa" stroke="#444" stroke-width="0.8"/><path d="M733.5 486.5h3l1-1.5h4l1 1.5h4v8h-13z" fill="#e8e8e8" stroke="#333" stroke-width="1"/><circle cx="740" cy="490.5" r="2.5" fill="#888" stroke="#222" stroke-width="1"/><rect x="744" y="484" width="2" height="2" fill="#111"/><path d="M764.5 487.5h9l-1 7h-7z" fill="#ddd" stroke="#333" stroke-width="1"/><path d="M764 487h10M767 485.5h4" stroke="#333" stroke-width="1.2"/><path d="M767.5 489v4M769.5 489v4M771.5 489v4" stroke="#666" stroke-width="0.8"/><rect x="794" y="486" width="1" height="1" fill="#8c8c8c"/><rect x="792" y="488" width="1" height="1" fill="#8c8c8c"/><rect x="794" y="488" width="1" height="1" fill="#8c8c8c"/><rect x="790" y="490" width="1" height="1" fill="#8c8c8c"/><rect x="792" y="490" width="1" height="1" fill="#8c8c8c"/><rect x="794" y="490" width="1" height="1" fill="#8c8c8c"/><rect x="788" y="492" width="1" height="1" fill="#8c8c8c"/><rect x="790" y="492" width="1" height="1" fill="#8c8c8c"/><rect x="792" y="492" width="1" height="1" fill="#8c8c8c"/><rect x="794" y="492" width="1" height="1" fill="#8c8c8c"/><rect x="786" y="494" width="1" height="1" fill="#8c8c8c"/><rect x="788" y="494" width="1" height="1" fill="#8c8c8c"/><rect x="790" y="494" width="1" height="1" fill="#8c8c8c"/><rect x="792" y="494" width="1" height="1" fill="#8c8c8c"/><rect x="794" y="494" width="1" height="1" fill="#8c8c8c"/><path d="M596 550c3-4 9-4 12 0c-3 4-9 4-12 0z" fill="#fff" stroke="#111" stroke-width="1.3"/><circle cx="602" cy="550" r="2.6" fill="#111"/><circle cx="601" cy="549" r="0.8" fill="#fff"/><path d="M597 553.5c2 1.5 8 1.5 10 0" fill="none" stroke="#555" stroke-width="0.8"/><path d="M596 587c3-4 9-4 12 0c-3 4-9 4-12 0z" fill="#fff" stroke="#111" stroke-width="1.3"/><circle cx="602" cy="587" r="2.6" fill="#111"/><circle cx="601" cy="586" r="0.8" fill="#fff"/><path d="M597 590.5c2 1.5 8 1.5 10 0" fill="none" stroke="#555" stroke-width="0.8"/><path d="M596 624c3-4 9-4 12 0c-3 4-9 4-12 0z" fill="#fff" stroke="#111" stroke-width="1.3"/><circle cx="602" cy="624" r="2.6" fill="#111"/><circle cx="601" cy="623" r="0.8" fill="#fff"/><path d="M597 627.5c2 1.5 8 1.5 10 0" fill="none" stroke="#555" stroke-width="0.8"/><path d="M596 661c3-4 9-4 12 0c-3 4-9 4-12 0z" fill="#fff" stroke="#111" stroke-width="1.3"/><circle cx="602" cy="661" r="2.6" fill="#111"/><circle cx="601" cy="660" r="0.8" fill="#fff"/><path d="M597 664.5c2 1.5 8 1.5 10 0" fill="none" stroke="#555" stroke-width="0.8"/><path d="M786 544l3.5-4 3.5 4z" fill="#222"/><path d="M786 669l3.5 4 3.5-4z" fill="#222"/><path d="M785 601.5h8M785 603.5h8M785 605.5h8" stroke="#666" stroke-width="1"/><circle cx="680.5" cy="685.5" r="4.3" fill="none" stroke="#333" stroke-width="1.1" stroke-dasharray="1.1 1.6"/><rect x="702.5" y="680.5" width="13" height="11" fill="#c4c4c4" stroke="#888" stroke-width="1"/><path d="M716 680v12h-13" fill="none" stroke="#555" stroke-width="1"/><circle cx="709" cy="686" r="3.6" fill="#fff" stroke="#666" stroke-width="0.8"/><rect x="735.5" y="682.5" width="9" height="9" fill="#fafafa" stroke="#777" stroke-width="1"/><path d="M745 682v10h-10" fill="none" stroke="#000" stroke-width="2"/><rect x="738" y="686" width="4" height="4" fill="#888"/><rect x="739" y="687" width="2" height="2" fill="#fff"/><path d="M765 685.5h8l-0.8 6h-6.4z" fill="#eee" stroke="#666" stroke-width="1"/><ellipse cx="769" cy="684.3" rx="4.3" ry="1.5" fill="#ddd" stroke="#666" stroke-width="0.9"/><path d="M767.5 687v4M770.5 687v4" stroke="#888" stroke-width="0.8"/><path d="M767.5 682.3h3" stroke="#666" stroke-width="1"/><rect x="794" y="683" width="1" height="1" fill="#8c8c8c"/><rect x="792" y="685" width="1" height="1" fill="#8c8c8c"/><rect x="794" y="685" width="1" height="1" fill="#8c8c8c"/><rect x="790" y="687" width="1" height="1" fill="#8c8c8c"/><rect x="792" y="687" width="1" height="1" fill="#8c8c8c"/><rect x="794" y="687" width="1" height="1" fill="#8c8c8c"/><rect x="788" y="689" width="1" height="1" fill="#8c8c8c"/><rect x="790" y="689" width="1" height="1" fill="#8c8c8c"/><rect x="792" y="689" width="1" height="1" fill="#8c8c8c"/><rect x="794" y="689" width="1" height="1" fill="#8c8c8c"/><rect x="786" y="691" width="1" height="1" fill="#8c8c8c"/><rect x="788" y="691" width="1" height="1" fill="#8c8c8c"/><rect x="790" y="691" width="1" height="1" fill="#8c8c8c"/><rect x="792" y="691" width="1" height="1" fill="#8c8c8c"/><rect x="794" y="691" width="1" height="1" fill="#8c8c8c"/></svg>
</body></html>
